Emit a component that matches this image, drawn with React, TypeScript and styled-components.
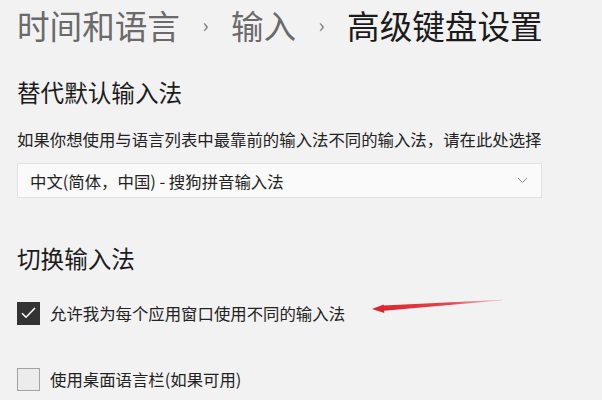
import React from 'react';
import styled, { createGlobalStyle } from 'styled-components';

const GlobalStyle = createGlobalStyle`
  html, body {
    margin: 0;
    padding: 0;
    background: #f2f2f2;
  }
  body {
    font-family: "Noto Sans CJK SC", "Noto Sans", sans-serif;
    color: #1b1b1b;
  }
`;

const Page = styled.div`
  position: relative;
  width: 602px;
  height: 400px;
  padding: 5px 0 0 17px;
  box-sizing: border-box;
  overflow: hidden;
`;

const Breadcrumb = styled.h1`
  display: flex;
  align-items: center;
  margin: 0;
  font-size: 32.6px;
  font-weight: 400;
  line-height: 40px;
  white-space: nowrap;
`;

const Crumb = styled.span<{ current?: boolean }>`
  color: ${(p) => (p.current ? '#1b1b1b' : '#6a6a6a')};
`;

const Separator = styled.span`
  display: inline-block;
  width: 51px;
  text-align: center;
  font-size: 20px;
  color: #7a7a7a;
`;

const SectionTitle = styled.h2<{ top: number }>`
  margin: ${(p) => p.top}px 0 0;
  font-size: 23.6px;
  font-weight: 400;
  line-height: 32px;
  color: #1b1b1b;
`;

const Description = styled.p`
  margin: 20px 0 0;
  font-size: 16.4px;
  line-height: 22px;
  color: #222;
  white-space: nowrap;
`;

const Select = styled.div`
  display: flex;
  align-items: center;
  justify-content: space-between;
  box-sizing: border-box;
  width: 525px;
  height: 35px;
  margin-top: 13px;
  padding: 0 13px 0 12px;
  background: #fafafa;
  border: 1px solid #e2e2e2;
  font-size: 16.4px;
  color: #222;
`;

const Chevron = styled.svg`
  width: 11px;
  height: 7px;
`;

const CheckRow = styled.label<{ top: number }>`
  display: flex;
  align-items: center;
  gap: 10px;
  height: 24px;
  margin-top: ${(p) => p.top}px;
  font-size: 16.4px;
  color: #222;
  white-space: nowrap;
`;

const Box = styled.span<{ checked?: boolean }>`
  display: flex;
  align-items: center;
  justify-content: center;
  box-sizing: border-box;
  width: 23px;
  height: 23px;
  background: ${(p) => (p.checked ? '#333' : '#ececec')};
  border: 1px solid ${(p) => (p.checked ? '#333' : '#a2a2a2')};
`;

const Annotation = styled.svg`
  position: absolute;
  left: 368px;
  top: 294px;
  width: 140px;
  height: 22px;
`;

export default function App() {
  return (
    <>
      <GlobalStyle />
      <Page>
        <Breadcrumb>
          <Crumb>时间和语言</Crumb>
          <Separator>›</Separator>
          <Crumb>输入</Crumb>
          <Separator>›</Separator>
          <Crumb current>高级键盘设置</Crumb>
        </Breadcrumb>

        <SectionTitle top={31}>替代默认输入法</SectionTitle>
        <Description>如果你想使用与语言列表中最靠前的输入法不同的输入法，请在此处选择</Description>
        <Select>
          <span>中文(简体，中国) - 搜狗拼音输入法</span>
          <Chevron viewBox="0 0 11 7">
            <path d="M1 1.2 L5.5 5.5 L10 1.2" fill="none" stroke="#888" strokeWidth="1" />
          </Chevron>
        </Select>

        <SectionTitle top={44}>切换输入法</SectionTitle>
        <CheckRow top={27}>
          <Box checked>
            <svg width="15" height="12" viewBox="0 0 15 12">
              <path d="M1 6.2 L5 10.2 L14 1" fill="none" stroke="#fff" strokeWidth="1.6" />
            </svg>
          </Box>
          允许我为每个应用窗口使用不同的输入法
        </CheckRow>
        <CheckRow top={42}>
          <Box />
          使用桌面语言栏(如果可用)
        </CheckRow>

        <Annotation viewBox="0 0 140 22">
          <defs>
            <linearGradient id="arrowFill" x1="0" y1="0" x2="1" y2="0">
              <stop offset="0" stopColor="#d92229" />
              <stop offset="0.6" stopColor="#e2474c" />
              <stop offset="1" stopColor="#f3a0a0" stopOpacity="0.6" />
            </linearGradient>
          </defs>
          <path
            d="M4 15 L16.3 19 L16.1 16.8 L135 6.3 L135 5.7 L15.9 11.6 L15.7 10.5 Z"
            fill="url(#arrowFill)"
          />
        </Annotation>
      </Page>
    </>
  );
}
